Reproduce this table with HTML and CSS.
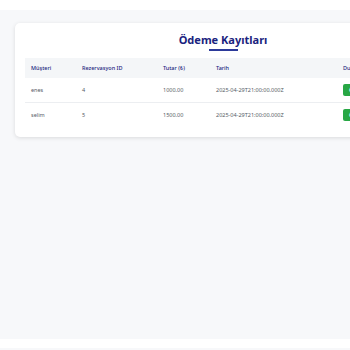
FILE: index.html
```html
<!DOCTYPE html>
<html lang="tr">
<head>
<meta charset="utf-8">
<title>Ödeme Kayıtları</title>
<link rel="stylesheet" href="styles.css">
</head>
<body>
<header class="topbar"></header>
<main class="main">
  <section class="card">
    <h2 class="title">Ödeme Kayıtları</h2>
    <table class="table">
      <colgroup>
        <col class="c1"><col class="c2"><col class="c3"><col class="c4"><col class="c5">
      </colgroup>
      <thead>
        <tr><th>Müşteri</th><th>Rezervasyon ID</th><th>Tutar (₺)</th><th>Tarih</th><th>Durum</th></tr>
      </thead>
      <tbody>
        <tr><td>enes</td><td>4</td><td>1000.00</td><td>2025-04-29T21:00:00.000Z</td><td><span class="badge">Ödendi</span></td></tr>
        <tr><td>selim</td><td>5</td><td>1500.00</td><td>2025-04-29T21:00:00.000Z</td><td><span class="badge">Ödendi</span></td></tr>
      </tbody>
    </table>
  </section>
</main>
<footer class="footer"></footer>
</body>
</html>
```
FILE: styles.css
```css
html, body {
  margin: 0;
  padding: 0;
}
body {
  min-height: 100vh;
  display: flex;
  flex-direction: column;
  background: #f7f8fa;
  font-family: "Noto Sans", "Open Sans", sans-serif;
}
.topbar {
  height: 10px;
  background: #ffffff;
  flex: none;
}
.main {
  flex: 1;
  padding: 13px 0 0 15px;
}
.footer {
  height: 9px;
  background: #ffffff;
  margin-bottom: 2px;
  flex: none;
}
.card {
  width: 396px;
  padding: 9px 10px 10px;
  background: #ffffff;
  border-radius: 5px;
  box-shadow: 0 1px 4px rgba(0, 0, 0, 0.12);
}
.title {
  margin: 0;
  text-align: center;
  font-size: 11px;
  line-height: 16px;
  font-weight: 700;
  color: #1a237e;
}
.title::after {
  content: "";
  display: block;
  width: 29px;
  height: 1.5px;
  margin: 1px auto 0;
  background: #2c3a9a;
}
.table {
  margin-top: 7px;
  width: 100%;
  table-layout: fixed;
  border-collapse: collapse;
  font-size: 5.5px;
}
.c1 { width: 51px; }
.c2 { width: 81px; }
.c3 { width: 53px; }
.c4 { width: 127px; }
.table th {
  background: #f4f6f8;
  color: #1a237e;
  font-weight: 500;
  text-align: left;
  height: 20px;
  padding: 0 6px;
  white-space: nowrap;
}
.table td {
  color: #555b66;
  height: 24px;
  padding: 0 6px;
  border-bottom: 1px solid #eceef1;
  white-space: nowrap;
}
.table tbody tr:last-child td {
  border-bottom: none;
}
.badge {
  display: inline-block;
  background: #28a745;
  color: #ffffff;
  font-size: 5.5px;
  font-weight: 600;
  line-height: 12px;
  padding: 0 6px;
  border-radius: 2px;
}
```
